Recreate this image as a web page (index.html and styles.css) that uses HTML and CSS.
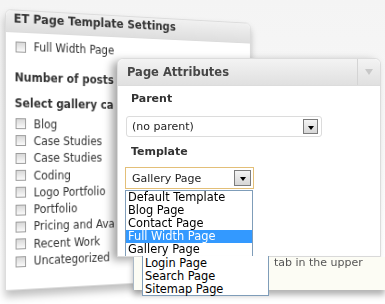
FILE: index.html
```html
<!DOCTYPE html>
<html>
<head>
  <meta charset="utf-8">
  <title>Page Attributes</title>
  <link rel="stylesheet" href="styles.css">
</head>
<body>
<div class="stage">

<div class="back_box">
  <div class="back_header">ET Page Template Settings</div>
  <div class="back_body">
    <div class="check_row"><span class="check"></span>Full Width Page</div>
    <div class="back_label lbl_posts">Number of posts</div>
    <div class="back_label lbl_cats">Select gallery ca</div>
    <div class="cat_list">
      <div class="check_row"><span class="check"></span>Blog</div>
      <div class="check_row"><span class="check"></span>Case Studies</div>
      <div class="check_row"><span class="check"></span>Case Studies</div>
      <div class="check_row"><span class="check"></span>Coding</div>
      <div class="check_row"><span class="check"></span>Logo Portfolio</div>
      <div class="check_row"><span class="check"></span>Portfolio</div>
      <div class="check_row"><span class="check"></span>Pricing and Ava</div>
      <div class="check_row"><span class="check"></span>Recent Work</div>
      <div class="check_row"><span class="check"></span>Uncategorized</div>
    </div>
  </div>
</div>

<div class="attr_box">
  <div class="attr_header">
    <div class="attr_title">Page Attributes</div>
    <div class="attr_toggle"><span class="tri_light"></span></div>
  </div>
  <div class="attr_body">
    <div class="attr_label">Parent</div>
    <div class="select select_parent"><span class="select_text">(no parent)</span><span class="select_btn"><span class="tri_dark"></span></span></div>
    <div class="attr_label">Template</div>
    <div class="select select_template"><span class="select_text">Gallery Page</span><span class="select_btn"><span class="tri_dark"></span></span></div>
  </div>
  <div class="drop_list">
    <div class="drop_item">Default Template</div>
    <div class="drop_item">Blog Page</div>
    <div class="drop_item">Contact Page</div>
    <div class="drop_item drop_sel">Full Width Page</div>
    <div class="drop_item">Gallery Page</div>
  </div>
</div>

<div class="attr_bottom">tab in the upper</div>
<div class="drop_tail">
  <div class="drop_item">Login Page</div>
  <div class="drop_item">Search Page</div>
  <div class="drop_item">Sitemap Page</div>
</div>

</div>
</body>
</html>
```

FILE: styles.css
```css
body { margin:0px; padding:0px; background:#fff;
  font-family:"DejaVu Sans", Verdana, sans-serif; font-size:11px; color:#333; }
.stage { position:relative; width:385px; height:304px; overflow:hidden;
  background:linear-gradient(#f4f4f4, #f8f8f8 50%, #fff 85%); }

/* back panel, seen in perspective */
.back_box { position:absolute; left:5px; top:9px; width:280px; height:280px;
  background:#fff; border:1px solid #dcdcdc; border-radius:6px 6px 0 0;
  transform-origin:0 50%; transform:perspective(670px) rotateY(15deg);
  box-shadow:0 6px 8px rgba(0,0,0,.25); }
.back_header { height:21px; line-height:16px; padding-left:8px;
  background:linear-gradient(#f1f1f1, #dedede); border-bottom:1px solid #dcdcdc;
  border-radius:6px 6px 0 0; font-weight:bold; font-size:12px; color:#333; }
.back_body { padding:7px 0 0 10px; font-size:11.5px; }
.check_row { display:flex; align-items:center; height:14px; white-space:nowrap; }
.check { width:9px; height:9px; margin-right:8px; border:1px solid #9c9c9c;
  background:linear-gradient(#d8d8d8, #fafafa); }
.back_label { font-weight:bold; line-height:14px; margin-left:-1px; white-space:nowrap; }
.lbl_posts { margin-top:17px; }
.lbl_cats { margin-top:12px; }
.cat_list { margin-top:5px; }
.cat_list .check_row { height:17.3px; }

/* page attributes box */
.attr_box { position:absolute; left:117px; top:58px; width:262px; height:197px;
  background:#fff; border:1px solid #dcdcdc; border-radius:6px 6px 0 0;
  box-shadow:-5px 3px 9px rgba(0,0,0,.35); }
.attr_header { display:flex; height:26px; border-bottom:1px solid #dcdcdc;
  background:linear-gradient(#f3f3f3, #e0e0e0); border-radius:6px 6px 0 0; }
.attr_title { flex:1; padding-left:9px; line-height:26px; font-weight:bold;
  font-size:11.5px; color:#464646; }
.attr_toggle { width:22px; border-left:1px solid #d4d4d4; display:flex;
  align-items:center; justify-content:center; }
.tri_light { width:0; height:0; border-left:4px solid transparent;
  border-right:4px solid transparent; border-top:6px solid #c8c8c8; }
.attr_body { padding:0 0 0 8px; }
.attr_label { font-weight:bold; line-height:14px; margin:6px 0 0 5px; color:#333; }
.attr_label + .select { margin-top:10px; }
.select_parent + .attr_label { margin-top:8px; }
.select { display:flex; align-items:center; background:#fff; box-sizing:border-box; }
.select_parent { width:196px; height:21px; border:1px solid #dcdcdc; border-radius:3px; }
.select_template { width:129px; height:22px; margin-left:-1px; margin-top:8px !important;
  border:1px solid #e3bf78; }
.select_text { flex:1; padding-left:5px; color:#222; white-space:nowrap; }
.select_template .select_text { padding-left:6px; }
.select_btn { width:15px; height:15px; margin-right:3px; box-sizing:border-box;
  border:1px solid #7c7c7c; background:linear-gradient(#f4f4f4, #d6d6d6);
  display:flex; align-items:center; justify-content:center; }
.select_template .select_btn { width:17px; height:16px; margin-right:2px; }
.tri_dark { width:0; height:0; border-left:3.5px solid transparent;
  border-right:3.5px solid transparent; border-top:4px solid #000; margin-top:2px; }

/* open dropdown */
.drop_list { position:absolute; left:7px; top:131px; width:128px; height:66px;
  overflow:hidden; box-sizing:border-box; border:1px solid #7f9db9; border-bottom:0;
  background:#fff; }
.drop_item { line-height:13px; height:13px; padding-left:2px; color:#000;
  font-size:11.4px; white-space:nowrap; }
.drop_sel { background:#3399ff; color:#fff; }

.attr_bottom { position:absolute; left:133px; top:257px; width:252px; height:33px;
  padding-left:140px; box-sizing:border-box; line-height:11px; color:#555;
  background:#fcfcf4; border-left:1px solid #a9b8c6;
  box-shadow:0 5px 6px rgba(0,0,0,.3); }
.drop_tail { position:absolute; left:142px; top:256px; width:127px; height:40px;
  box-sizing:border-box; border:1px solid #7f9db9; border-top:0; background:#fff; padding-top:1px; }
```
